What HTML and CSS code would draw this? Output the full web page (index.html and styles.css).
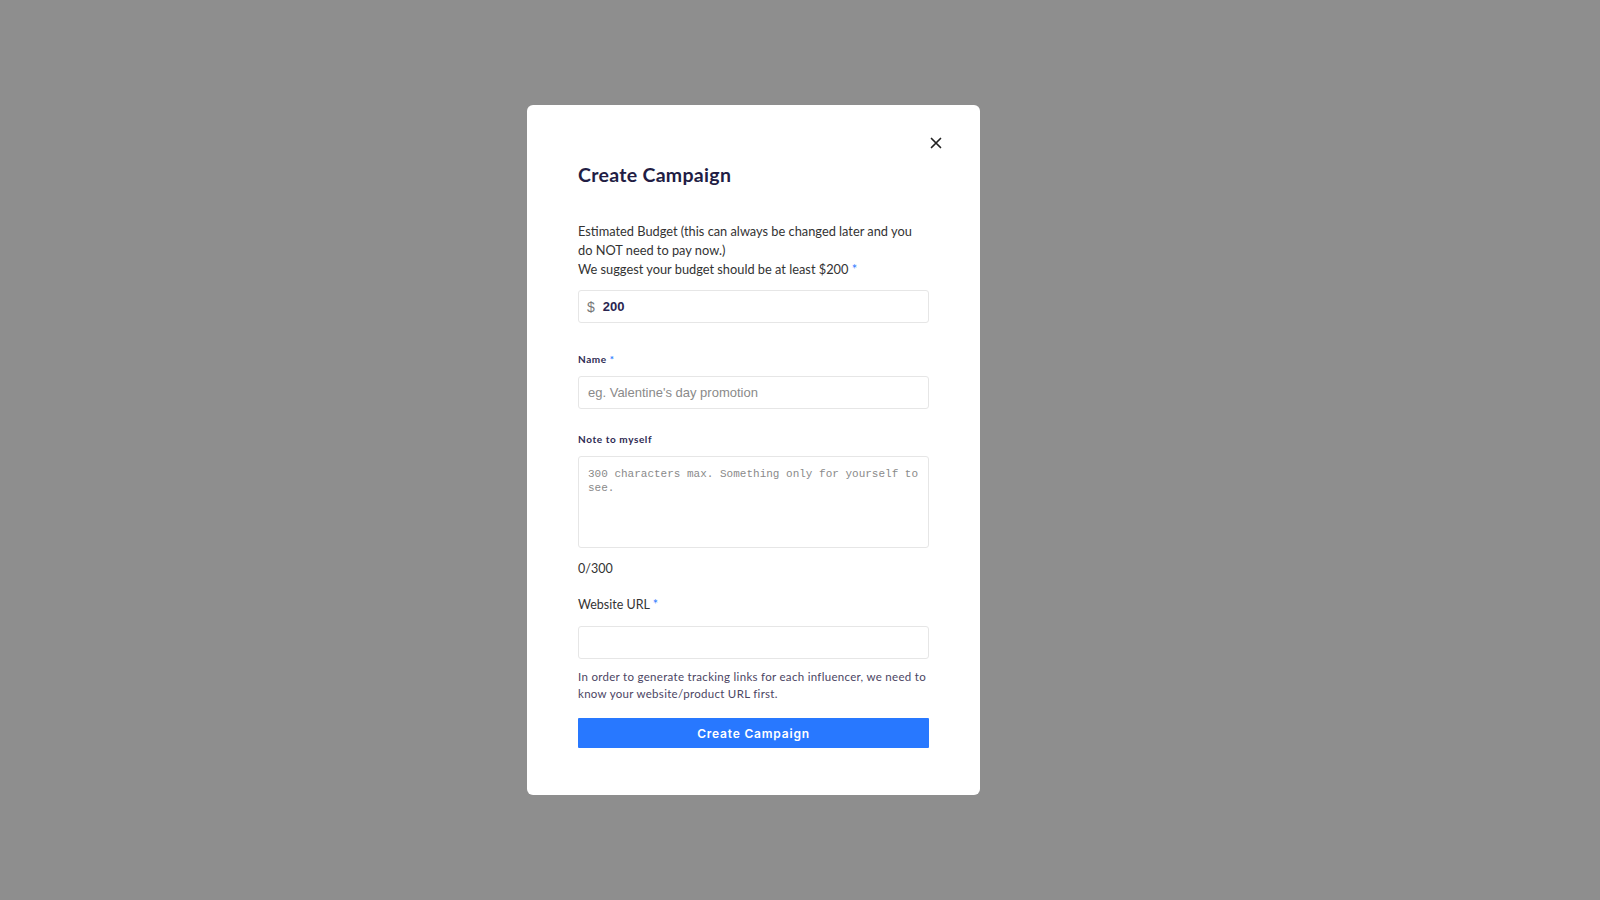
FILE: index.html
```html
<!DOCTYPE html>
<html>
<head>
<meta charset="utf-8">
<link rel="stylesheet" href="styles.css">
</head>
<body>
<div class="overlay">
  <div class="modal">
    <div class="close-row">
      <button class="close" aria-label="Close">
        <svg width="12" height="12" viewBox="0 0 12 12"><path d="M1.5 1.5L10.5 10.5M10.5 1.5L1.5 10.5" stroke="#222" stroke-width="1.7" stroke-linecap="round"/></svg>
      </button>
    </div>
    <h1 class="title">Create Campaign</h1>
    <p class="intro">Estimated Budget (this can always be changed later and you do NOT need to pay now.)<br>We suggest your budget should be at least $200 <span class="req">*</span></p>
    <div class="input budget"><span class="cur">$</span><span class="val">200</span></div>
    <label class="label label-name">Name <span class="req">*</span></label>
    <div class="input"><span class="ph">eg. Valentine's day promotion</span></div>
    <label class="label label-note">Note to myself</label>
    <div class="textarea"><span class="ph-mono">300 characters max. Something only for yourself to see.</span></div>
    <div class="counter">0/300</div>
    <label class="url-label">Website URL <span class="req">*</span></label>
    <div class="input"></div>
    <p class="help">In order to generate tracking links for each influencer, we need to know your website/product URL first.</p>
    <button class="submit">Create Campaign</button>
  </div>
</div>
</body>
</html>
```

FILE: styles.css
```css
html, body {
  margin: 0;
  padding: 0;
}
body {
  background: #8e8e8e;
  width: 1600px;
  height: 900px;
  overflow: hidden;
  font-family: Lato, "Open Sans", sans-serif;
}
.overlay {
  height: 900px;
  display: flex;
  align-items: center;
  padding-left: 527px;
  box-sizing: border-box;
}
.modal {
  width: 453px;
  height: 690px;
  box-sizing: border-box;
  background: #fff;
  border-radius: 6px;
  padding: 28px 51px 47px;
  display: flex;
  flex-direction: column;
}
.close-row {
  display: flex;
  justify-content: flex-end;
  height: 20px;
  margin-right: -14px;
}
.close {
  border: 0;
  background: none;
  padding: 0;
  width: 14px;
  height: 20px;
  display: flex;
  align-items: center;
  justify-content: center;
  cursor: pointer;
}
.title {
  margin: 10px 0 0;
  font-size: 19.5px;
  line-height: 24px;
  font-weight: 700;
  letter-spacing: 0.3px;
  color: #221d44;
}
.intro {
  margin: 35px 0 0;
  font-size: 12.8px;
  line-height: 19px;
  color: #333;
}
.req {
  color: #2d7bff;
}
.input {
  margin-top: 11px;
  height: 33px;
  box-sizing: border-box;
  border: 1px solid #e6e6e6;
  border-radius: 3px;
  display: flex;
  align-items: center;
  padding: 0 9px;
}
.budget {
  gap: 8px;
  padding-left: 8px;
}
.cur {
  color: #777;
  font-family: "Liberation Sans", Arial, sans-serif;
  font-size: 14px;
}
.val {
  color: #2a2550;
  font-family: "Liberation Sans", Arial, sans-serif;
  font-weight: 700;
  font-size: 13px;
}
.ph {
  color: #8a8a8a;
  font-family: "Liberation Sans", Arial, sans-serif;
  font-size: 13px;
}
.label {
  display: block;
  font-size: 10px;
  line-height: 14px;
  font-weight: 700;
  letter-spacing: 0.6px;
  color: #2e2a52;
}
.label-name {
  margin-top: 29px;
}
.label-note {
  margin-top: 23px;
}
.label + .input,
.label + .textarea {
  margin-top: 10px;
}
.textarea {
  height: 92px;
  box-sizing: border-box;
  border: 1px solid #e6e6e6;
  border-radius: 3px;
  padding: 10px 8px 10px 9px;
}
.ph-mono {
  font-family: "Liberation Mono", "Courier New", monospace;
  font-size: 11px;
  line-height: 14px;
  color: #8a8a8a;
  display: block;
}
.counter {
  margin-top: 11px;
  font-size: 12.5px;
  line-height: 19px;
  color: #333;
}
.url-label {
  display: block;
  margin-top: 17px;
  font-size: 12.5px;
  line-height: 19px;
  color: #333;
}
.url-label + .input {
  margin-top: 12px;
}
.help {
  margin: 9px 0 0;
  font-size: 11.5px;
  line-height: 17px;
  letter-spacing: 0.3px;
  color: #4b4563;
}
.submit {
  margin-top: 16px;
  height: 30px;
  border: 0;
  border-radius: 1px;
  background: #2878ff;
  color: #fff;
  font-family: Inter, "Noto Sans", sans-serif;
  font-weight: 600;
  font-size: 12px;
  letter-spacing: 0.8px;
  cursor: pointer;
}
```
